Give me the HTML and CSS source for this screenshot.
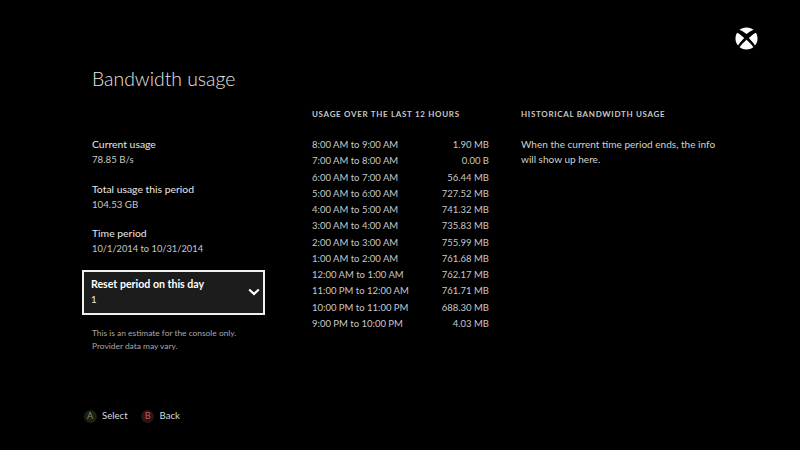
FILE: index.html
```html
<!DOCTYPE html>
<html lang="en">
<head>
<meta charset="utf-8">
<title>Bandwidth usage</title>
<link rel="stylesheet" href="styles.css">
</head>
<body>
<div class="screen">
  <svg class="logo" viewBox="0 0 24 24" aria-hidden="true"><circle cx="12" cy="12" r="11.5" fill="#fff"/><path d="M2.5 2 Q8 3.6 12 7.4 Q16 3.6 21.5 2 L23.5 5 Q18 7.5 14.4 11.4 Q19.5 16.5 21.7 20.5 L20 22 Q16.5 17 12 13.2 Q7.5 17 4 22 L2.3 20.5 Q4.5 16.5 9.6 11.4 Q6 7.5 .5 5 Z" fill="#000"/></svg>
  <main class="columns">
    <section class="left">
      <h1 class="title">Bandwidth usage</h1>
      <div class="stat"><div class="label">Current usage</div><div class="value">78.85 B/s</div></div>
      <div class="stat"><div class="label">Total usage this period</div><div class="value">104.53 GB</div></div>
      <div class="stat"><div class="label">Time period</div><div class="value date">10/1/2014 to 10/31/2014</div></div>
      <div class="select">
        <div><div class="label strong">Reset period on this day</div><div class="value white">1</div></div>
        <svg class="chevron" viewBox="0 0 12 8" aria-hidden="true"><path d="M1.2 1.5 L6 6 L10.8 1.5" fill="none" stroke="#fff" stroke-width="2.2"/></svg>
      </div>
      <p class="note">This is an estimate for the console only.<br>Provider data may vary.</p>
    </section>
    <section class="middle">
      <h2 class="heading">USAGE OVER THE LAST 12 HOURS</h2>
      <div class="rows">
        <div class="row"><span>8:00 AM to 9:00 AM</span><span>1.90 MB</span></div>
        <div class="row"><span>7:00 AM to 8:00 AM</span><span>0.00 B</span></div>
        <div class="row"><span>6:00 AM to 7:00 AM</span><span>56.44 MB</span></div>
        <div class="row"><span>5:00 AM to 6:00 AM</span><span>727.52 MB</span></div>
        <div class="row"><span>4:00 AM to 5:00 AM</span><span>741.32 MB</span></div>
        <div class="row"><span>3:00 AM to 4:00 AM</span><span>735.83 MB</span></div>
        <div class="row"><span>2:00 AM to 3:00 AM</span><span>755.99 MB</span></div>
        <div class="row"><span>1:00 AM to 2:00 AM</span><span>761.68 MB</span></div>
        <div class="row"><span>12:00 AM to 1:00 AM</span><span>762.17 MB</span></div>
        <div class="row"><span>11:00 PM to 12:00 AM</span><span>761.71 MB</span></div>
        <div class="row"><span>10:00 PM to 11:00 PM</span><span>688.30 MB</span></div>
        <div class="row"><span>9:00 PM to 10:00 PM</span><span>4.03 MB</span></div>
      </div>
    </section>
    <section class="right">
      <h2 class="heading">HISTORICAL BANDWIDTH USAGE</h2>
      <p class="history">When the current time period ends, the info will show up here.</p>
    </section>
  </main>
  <footer class="hints">
    <span class="hint"><span class="btn btn-a">A</span>Select</span>
    <span class="hint"><span class="btn btn-b">B</span>Back</span>
  </footer>
</div>
</body>
</html>
```
FILE: styles.css
```css
* { box-sizing: border-box; }
html, body { margin: 0; padding: 0; background: #000; }
body { font-family: Lato, "Open Sans", sans-serif; color: #d8d8d8; }
.screen { position: relative; width: 800px; height: 450px; overflow: hidden; padding: 65px 0 0 82px; background: #000; }
.logo { position: absolute; left: 735px; top: 27px; width: 23px; height: 23px; }
.columns { display: flex; height: 335px; }
.left { width: 183px; margin-right: 47px; }
.middle { width: 177px; margin-right: 32px; padding-top: 43px; }
.right { width: 200px; padding-top: 43px; }
.title { margin: 0 0 45px 10px; font-size: 19.4px; line-height: 27px; font-weight: 300; color: #e4e4e4; }
.stat { margin: 0 0 14.5px 10px; height: 30px; }
.label { font-size: 10.4px; line-height: 15px; color: #e8e8e8; font-weight: 400; white-space: nowrap; }
.value { font-size: 9.7px; line-height: 15px; color: #c8c8c8; white-space: nowrap; }
.value.date { font-size: 9.3px; }
.value.white { color: #eee; }
.strong { font-size: 10.6px; font-weight: 700; color: #fff; }
.select { display: flex; align-items: center; justify-content: space-between; height: 45px; margin-top: -1px; padding: 0 3px 0 7px; border: 2px solid #f0f0f0; background: #1c1c1c; }
.chevron { width: 12px; height: 8px; }
.note { margin: 12px 0 0 10px; font-size: 8.4px; line-height: 13px; color: #a8a8a8; white-space: nowrap; }
.heading { margin: 0 0 17px; font-size: 8px; line-height: 12px; font-weight: 700; letter-spacing: .68px; color: #c8c8c8; white-space: nowrap; }
.row { display: flex; justify-content: space-between; height: 16.27px; font-size: 9.5px; line-height: 16px; color: #c8c8c8; white-space: nowrap; }
.history { margin: 0; font-size: 10.05px; line-height: 14.5px; color: #d0d0d0; }
.hints { display: flex; gap: 13.5px; margin-left: 1.5px; padding-top: 7px; font-size: 9.6px; line-height: 18px; color: #d8d8d8; }
.hint { display: flex; align-items: center; gap: 5.5px; }
.btn { display: flex; align-items: center; justify-content: center; width: 13px; height: 13px; border-radius: 50%; font-size: 9px; font-weight: 400; }
.btn-a { background: #1a2012; color: #7f8f58; }
.btn-b { background: #2c1414; color: #c65a58; }
```
